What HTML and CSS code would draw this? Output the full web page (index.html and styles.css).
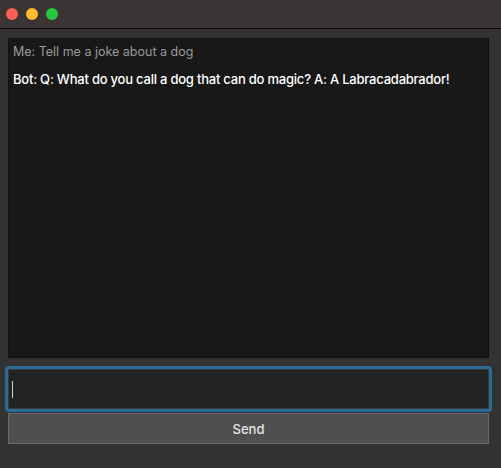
FILE: index.html
```html
<!DOCTYPE html>
<html>
<head>
<meta charset="utf-8">
<link rel="stylesheet" href="styles.css">
</head>
<body>
<div class="window">
  <div class="titlebar">
    <span class="light red"></span>
    <span class="light yellow"></span>
    <span class="light green"></span>
  </div>
  <div class="content">
    <div class="chat">
      <div class="msg me">Me: Tell me a joke about a dog</div>
      <div class="msg bot">Bot: Q: What do you call a dog that can do magic? A: A Labracadabrador!</div>
    </div>
    <div class="entry"><span class="caret"></span></div>
    <button class="send">Send</button>
  </div>
</div>
</body>
</html>
```
FILE: styles.css
```css
* { box-sizing: border-box; }
html, body { margin: 0; padding: 0; }
body {
  width: 501px;
  height: 468px;
  background: #323232;
  font-family: "Inter", "Noto Sans", sans-serif;
  overflow: hidden;
}
.window { display: flex; flex-direction: column; height: 468px; }
.titlebar {
  height: 29px;
  background: #3a3434;
  border-bottom: 1px solid #0e0e0e;
  display: flex;
  align-items: center;
  gap: 8px;
  padding-left: 6px;
  padding-bottom: 1px;
}
.light { width: 12px; height: 12px; border-radius: 50%; display: block; }
.red { background: #fe5f57; }
.yellow { background: #febc2e; }
.green { background: #28c840; }
.content {
  display: flex;
  flex-direction: column;
  padding: 9px 12px 0 8px;
}
.chat {
  height: 320px;
  background: #181818;
  border: 1px solid #111;
  padding: 5px 4px;
}
.msg { line-height: 16px; white-space: nowrap; }
.me { color: #9a9a9a; margin-bottom: 11px; font-size: 12.5px; }
.bot { color: #ffffff; font-weight: 500; font-size: 13px; letter-spacing: -0.22px; }
.entry {
  margin: 8px -3px 0 -3px;
  height: 46px;
  background: #232323;
  border: 3px solid #2a6a98;
  border-radius: 4px;
  box-shadow: inset 0 0 0 1px #3a3a3a;
  display: flex;
  align-items: center;
  padding-left: 4px;
}
.caret { width: 1px; height: 17px; background: #d0d0d0; display: block; }
.send {
  margin-top: 1px;
  height: 31px;
  background: #4f4f4f;
  border: 1px solid #6a6a6a;
  color: #e6e6e6;
  font-family: inherit;
  font-size: 13px;
  font-weight: 500;
  padding: 0;
}
```
